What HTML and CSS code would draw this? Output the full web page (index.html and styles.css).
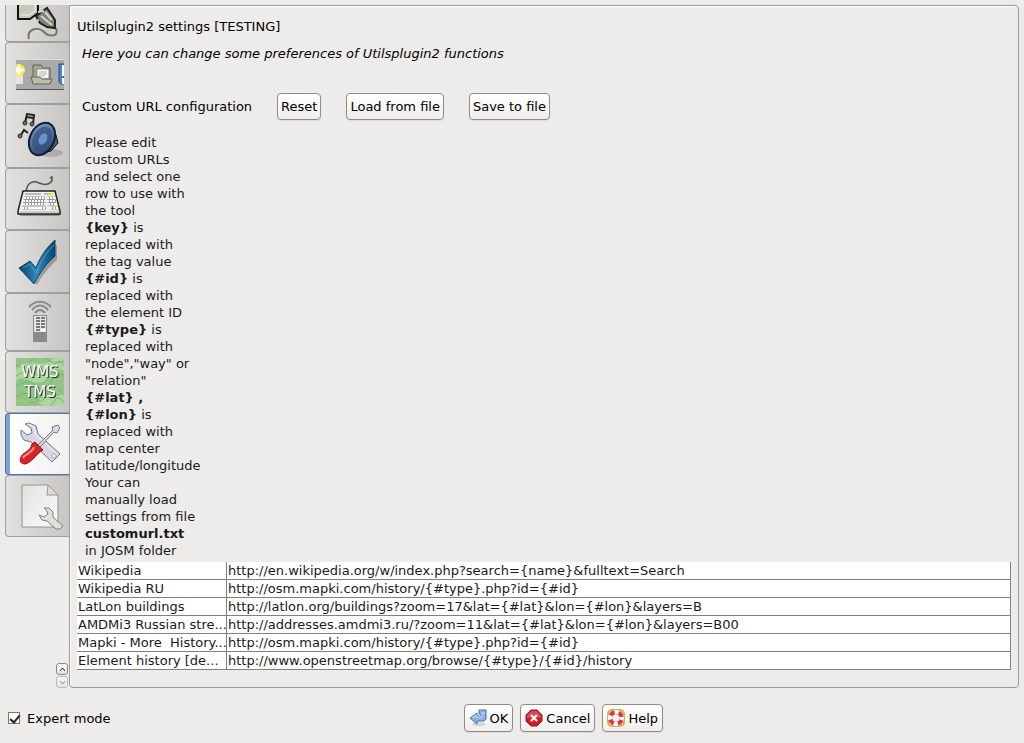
FILE: index.html
```html
<!DOCTYPE html>
<html lang="en">
<head>
    <meta charset="UTF-8">
    <meta name="viewport" content="width=device-width, initial-scale=1.0">
    <title>Preferences</title>
    <link rel="stylesheet" href="styles.css">
</head>
<body>
    <main class="preferences">
        <nav class="sidebar">
            <div class="tabs">
                <button class="tab tab-cut" aria-label="Connection">
                    <svg width="48" height="48" viewBox="0 0 48 48">
                        <path d="M2 6V27H14L22 21V6Z" fill="#c6cabb" stroke="#111" stroke-width="2"/>
                        <path d="M5 23H13L19 19V6" fill="none" stroke="#f1f2ec"/>
                        <path d="M13 47C10 38 21 34 27 39C32 45 44 46 40 36" fill="none" stroke="#73796b" stroke-width="2"/>
                        <path d="M20 24L31 16L39 28L39 36L31 35L24 31Z" fill="#7f8578" stroke="#22251f" stroke-width="2"/>
                        <path d="M23 28L18 30M28 19L22 20M25 24L36 33M29 20L36 28" stroke="#d4d6cc" stroke-width="2"/>
                    </svg>
                </button>
                <button class="tab" aria-label="Toolbar">
                    <svg width="48" height="48" viewBox="0 0 48 48">
                        <path d="M0 10H48V41H0Z" fill="#aaa"/>
                        <path d="M0 10.500H48" stroke="#ddd"/>
                        <path d="M0 40.500H48" stroke="#555"/>
                        <path d="M0 18H7V35H0Z" fill="#e3e3e0"/>
                        <circle cx="3" cy="21" r="6" fill="#f4e93c"/>
                        <path d="M3 15L5 19L9 21L5 23L3 27L0 23V19Z" fill="#fffde0"/>
                        <path d="M17 33V16H25L27 19H34V33Z" fill="#a6a78f" stroke="#62634f"/>
                        <path d="M21 20H33V30H21Z" fill="#fff" stroke="#888"/>
                        <path d="M23 23H31M23 25H31M23 27H29" stroke="#aaa"/>
                        <path d="M15 28H24L26 30H36L34 35H17Z" fill="#bdbea7" stroke="#62634f"/>
                        <path d="M48 15H43V33L45 35H48Z" fill="#4d86cc" stroke="#204a87"/>
                        <path d="M46 16H48V27H46ZM46 29H48V35H46Z" fill="#fff"/>
                    </svg>
                </button>
                <button class="tab tab-audio" aria-label="Audio">
                    <svg width="48" height="48" viewBox="0 0 48 48">
                        <defs>
                            <linearGradient id="cone" x2="1" y2="1"><stop stop-color="#8ba8d4"/><stop offset="1" stop-color="#183562"/></linearGradient>
                        </defs>
                        <ellipse cx="35" cy="41" rx="12" ry="4" fill="#000" opacity=".15"/>
                        <path d="M9 11L11 2L18 3L17 12M10 5L18 6" fill="none" stroke="#222" stroke-width="2"/>
                        <path d="M5 23L8 18L12 21" fill="none" stroke="#222" stroke-width="2"/>
                        <g fill="#767657" stroke="#222"><circle cx="9" cy="11" r="2"/><circle cx="16" cy="12" r="2"/><circle cx="4" cy="24" r="2"/></g>
                        <path d="M32 10L40 23L42 31L35 39L20 42Z" fill="#55585e" stroke="#111"/>
                        <ellipse cx="26" cy="27" rx="12" ry="17" transform="rotate(26 26 27)" fill="url(#cone)" stroke="#111d31" stroke-width="2"/>
                        <ellipse cx="26" cy="27" rx="9" ry="13" transform="rotate(26 26 27)" fill="#365380" opacity=".75"/>
                        <ellipse cx="27" cy="27" rx="4" ry="6" transform="rotate(26 27 27)" fill="#6d91c6"/>
                    </svg>
                </button>
                <button class="tab" aria-label="Shortcuts">
                    <svg width="48" height="48" viewBox="0 0 48 48">
                        <path d="M10 17C11 7 18 5 23 8C30 11 37 9 36 2L34 3" fill="none" stroke="#555" stroke-width="1.500"/>
                        <path d="M4 38H45L43 41H4Z" fill="#000" opacity=".3"/>
                        <path d="M7 16H39L44 36V39H2V36Z" fill="#eee" stroke="#222" stroke-width="1.500"/>
                        <path d="M9 19H25M28 19H32" stroke="#bbb" stroke-width="2"/>
                        <path d="M32 19H37" stroke="#e9dd24" stroke-width="2"/>
                        <path d="M8 23H29M7 26H29M7 29H30M6 33H30M31 23H39M31 26H40M32 29H40M34 33H42" stroke="#999" stroke-width="3"/>
                        <path d="M8 23H29M7 26H29M7 29H30M6 33H30M31 23H39M31 26H40M32 29H40M34 33H42" stroke="#fff" stroke-width="2" stroke-dasharray="2 1"/>
                        <path d="M12 33H25" stroke="#fff" stroke-width="2"/>
                        <path d="M3 37H43" stroke="#aaa"/>
                    </svg>
                </button>
                <button class="tab tab-check" aria-label="Data validator">
                    <svg width="48" height="48" viewBox="0 0 48 48">
                        <defs>
                            <linearGradient id="tick" x2="1"><stop stop-color="#0a416b"/><stop offset=".5" stop-color="#3288b9"/><stop offset="1" stop-color="#09436d"/></linearGradient>
                        </defs>
                        <path d="M6 33L17 26L23 32C27 20 33 12 41 7V22C34 28 27 36 21 47Z" fill="#000" opacity=".25"/>
                        <path d="M3 30L14 23L20 30C24 19 31 9 39 2V18C31 25 24 34 18 46Z" fill="url(#tick)" stroke="#0b446c"/>
                        <path d="M7 30L14 26L20 35C25 22 31 14 38 7" fill="none" stroke="#62a8cd" opacity=".7"/>
                    </svg>
                </button>
                <button class="tab tab-remote" aria-label="Remote control">
                    <svg width="48" height="48" viewBox="0 0 48 48">
                        <g fill="none" stroke="#888b8d" stroke-width="2"><path d="M13 9C19 2 29 2 35 9"/><path d="M16 12C21 6 27 6 32 12"/><path d="M19 15C22 11 26 11 29 15"/></g>
                        <path d="M17 17H31V44H17Z" fill="#888b8d"/>
                        <path d="M18 18H30V34H18Z" fill="#e6e6e6"/>
                        <path d="M20 20H24M20 23H24M20 26H24M20 29H24M20 32H24M25 20H29M25 23H29M25 26H29M25 29H29" stroke="#777a7c" stroke-width="2"/>
                        <path d="M25 31H29V33H25Z" fill="#fff"/>
                    </svg>
                </button>
                <button class="tab" aria-label="Imagery">
                    <svg width="48" height="48" viewBox="0 0 48 48">
                        <path d="M0 0H48V48H0Z" fill="#8fc587"/>
                        <path d="M0 12Q9 2 20 5T38 0H48V13Q37 7 32 18T12 22T0 35ZM21 48Q23 36 36 38T48 30V48Z" fill="#acd59f"/>
                        <path d="M0 7Q11 12 15 3T25 0M0 18Q12 10 19 16T35 10T48 8M0 28Q13 20 20 28T35 24T48 18M0 39Q11 31 18 40T32 35T48 37M9 48Q14 41 24 47T38 44T48 45M29 0Q38 8 48 3" fill="none" stroke="#7bb273"/>
                        <path d="M5 0Q8 8 0 12M0 44Q8 38 13 48M35 48Q36 28 48 25" fill="none" stroke="#b4c67f"/>
                        <g class="map-shadow"><text x="25" y="20">WMS</text><text x="25" y="40">TMS</text></g>
                        <g class="map-text"><text x="24" y="19">WMS</text><text x="24" y="39">TMS</text></g>
                    </svg>
                </button>
                <button class="tab tab-active" aria-label="Plugins">
                    <svg width="48" height="48" viewBox="0 0 48 48">
                        <path d="M9 4L13 3L20 6L22 14L44 34L36 42L15 22L8 20L5 15V10L11 15L16 13L15 8Z" fill="#d6d7e2" stroke="#717386"/>
                        <path d="M12 4L18 7L20 15L41 34" fill="none" stroke="#f4f4fa"/>
                        <circle cx="38" cy="36" r="2" fill="#fff" stroke="#aaa"/>
                        <path d="M22 25L37 10L36 7L42 5L44 8L41 13L38 12L24 27Z" fill="#d7dce1" stroke="#6f7782"/>
                        <path d="M16 24L19 22L27 30L24 32C21 34 15 43 9 44C5 44 3 41 5 37C6 33 15 31 16 24Z" fill="#d9232b" stroke="#990d14"/>
                        <path d="M7 38C8 35 16 33 18 27" fill="none" stroke="#ff9295" stroke-width="2"/>
                    </svg>
                </button>
                <button class="tab" aria-label="Advanced preferences">
                    <svg width="48" height="48" viewBox="0 0 48 48">
                        <defs>
                            <linearGradient id="page" x2="1" y2="1"><stop stop-color="#e2e2e2"/><stop offset="1" stop-color="#fafafa"/></linearGradient>
                        </defs>
                        <path d="M6 3H32L42 13V45H6Z" fill="url(#page)" stroke="#929292"/>
                        <path d="M32 3L31 13H42Z" fill="#ddd" stroke="#999"/>
                        <path d="M28 26L33 26L37 30L37 35L47 44L44 47H40L31 39L26 38L23 33L28 35L32 32L31 29Z" fill="#dfe0d9" stroke="#7e7f78"/>
                    </svg>
                </button>
            </div>
            <div class="scrollers">
                <button class="scroll-btn" aria-label="Scroll up"><svg width="7" height="7" viewBox="0 0 7 7"><path d="M1 5L3.500 2L6 5"/></svg></button>
                <button class="scroll-btn" aria-label="Scroll down" disabled><svg width="7" height="7" viewBox="0 0 7 7"><path d="M1 2L3.500 5L6 2"/></svg></button>
            </div>
        </nav>

        <section class="panel">
            <h1>Utilsplugin2 settings [TESTING]</h1>
            <p class="description">Here you can change some preferences of Utilsplugin2 functions</p>
            <div class="url-bar">
                <h2>Custom URL configuration</h2>
                <button class="btn">Reset</button>
                <button class="btn">Load from file</button>
                <button class="btn">Save to file</button>
            </div>
            <p class="help-text">
                Please edit custom URLs and select one row to use with the tool<br>
                <b>{key}</b> is replaced with the tag value<br>
                <b>{#id}</b> is replaced with the element ID<br>
                <b>{#type}</b> is replaced with "node","way" or "relation"<br>
                <b>{#lat} , {#lon}</b> is replaced with map center latitude/longitude<br>
                Your can manually load settings from file <b>customurl.txt</b><br>
                in JOSM folder
            </p>
            <table class="url-table" aria-label="Custom URLs">
                <tbody>
                    <tr><td class="name">Wikipedia</td><td>http://en.wikipedia.org/w/index.php?search={name}&amp;fulltext=Search</td></tr>
                    <tr><td class="name">Wikipedia RU</td><td>http://osm.mapki.com/history/{#type}.php?id={#id}</td></tr>
                    <tr><td class="name">LatLon buildings</td><td>http://latlon.org/buildings?zoom=17&amp;lat={#lat}&amp;lon={#lon}&amp;layers=B</td></tr>
                    <tr><td class="name">AMDMi3 Russian stre...</td><td>http://addresses.amdmi3.ru/?zoom=11&amp;lat={#lat}&amp;lon={#lon}&amp;layers=B00</td></tr>
                    <tr><td class="name">Mapki - More&nbsp; History...</td><td>http://osm.mapki.com/history/{#type}.php?id={#id}</td></tr>
                    <tr><td class="name">Element history [de...</td><td>http://www.openstreetmap.org/browse/{#type}/{#id}/history</td></tr>
                </tbody>
            </table>
        </section>
    </main>

    <footer class="footer">
        <label class="expert" for="expert"><input type="checkbox" id="expert" checked> Expert mode</label>
        <div class="actions">
            <button class="btn btn-icon">
                <svg width="18" height="18" viewBox="0 0 18 18">
                    <ellipse cx="10" cy="15" rx="7" ry="2" fill="#000" opacity=".12"/>
                    <path d="M1 9L8 4V7H12V5H10V1H17V10L15 12H8V15Z" fill="#8db3de" stroke="#4674ac"/>
                    <path d="M3 9L7 6V8H13V4H16" fill="none" stroke="#c7dcf3"/>
                </svg>
                OK
            </button>
            <button class="btn btn-icon">
                <svg width="18" height="18" viewBox="0 0 18 18">
                    <path d="M6 1H12L17 6V12L12 17H6L1 12V6Z" fill="#cf2029" stroke="#9f1118"/>
                    <path d="M6 2H12L16 6V9H2V6Z" fill="#e46167" opacity=".6"/>
                    <path d="M6 6L12 12M12 6L6 12" stroke="#fff" stroke-width="2"/>
                </svg>
                Cancel
            </button>
            <button class="btn btn-icon">
                <svg width="18" height="18" viewBox="0 0 18 18">
                    <rect x="1" y="1" width="16" height="16" rx="4" fill="#f3e3a4" stroke="#d9b33e" stroke-width="2"/>
                    <circle cx="9" cy="9" r="6" fill="#f5f4f3" stroke="#a9a9a9" stroke-width="5"/>
                    <circle cx="9" cy="9" r="6" fill="none" stroke="#fff" stroke-width="4"/>
                    <circle cx="9" cy="9" r="6" fill="none" stroke="#e33437" stroke-width="4" stroke-dasharray="5 4.425" stroke-dashoffset="-2.212"/>
                </svg>
                Help
            </button>
        </div>
    </footer>
</body>
</html>
```

FILE: styles.css
```css
* {
    box-sizing: border-box;
    margin: 0;
    padding: 0;
}

body {
    background-color: #edecea;
    color: #1a1a1a;
    font-family: "DejaVu Sans", sans-serif;
    font-size: 13px;
    line-height: 17px;
    padding: 5px;
}

button {
    font: inherit;
    color: #000;
}

svg {
    display: block;
    flex: none;
}

.preferences {
    display: flex;
}

.sidebar {
    display: flex;
    flex-direction: column;
    justify-content: space-between;
    width: 64px;
}

.tabs {
    display: flex;
    flex-direction: column;
}

.tab {
    display: flex;
    align-items: center;
    justify-content: center;
    height: 62px;
    padding-left: 4px;
    border: 1px solid #a19f9c;
    border-right: none;
    border-radius: 4px 0 0 4px;
    background: linear-gradient(to right, #e2e1df, #c8c6c3);
}

.tab-cut {
    height: 37px;
    align-items: flex-end;
    padding-bottom: 1px;
    border-top: none;
    border-radius: 0 0 0 4px;
    overflow: hidden;
}

.tab-audio {
    height: 64px;
}

.tab-check {
    height: 63px;
}

.tab-remote {
    height: 58px;
}

/* selected tab has a blue stripe on the left */
.tab-active {
    border-color: #4b76a8;
    background: linear-gradient(to right, #7ba4d6 4px, #fff 4px, #f1f0ef);
}

.map-text,
.map-shadow {
    font-size: 15px;
    text-anchor: middle;
    fill: #fff;
}

.map-shadow {
    fill: #222;
}

.scrollers {
    display: flex;
    flex-direction: column;
    align-items: flex-end;
    gap: 1px;
    padding-right: 1px;
}

.scroll-btn {
    display: flex;
    align-items: center;
    justify-content: center;
    width: 12px;
    height: 12px;
    border: 1px solid #8b8986;
    border-radius: 3px;
    background: linear-gradient(#fff, #e2e1df);
}

.scroll-btn path {
    fill: none;
    stroke: #222;
}

.scroll-btn:disabled {
    opacity: 0.5;
}

.panel {
    flex: 1;
    min-width: 0;
    padding: 12px 7px 17px;
    border: 1px solid #9c9a97;
    border-radius: 0 4px 4px 4px;
    box-shadow: inset 1px 1px #fff;
}

h1,
h2 {
    font-size: 13px;
    font-weight: normal;
    color: #000;
}

.description {
    margin: 10px 5px 31px;
    color: #000;
    font-style: italic;
}

.url-bar {
    display: flex;
    align-items: center;
    gap: 25px;
    padding-left: 5px;
}

.btn {
    height: 27px;
    padding: 0 3px;
    border: 1px solid #8e8c89;
    border-radius: 4px;
    background: linear-gradient(#fff, #efeeed);
    box-shadow: 0 1px 1px #dddbd9;
}

.help-text {
    width: 112px;
    margin: 14px 8px 3px;
}

.url-table {
    width: 100%;
    table-layout: fixed;
    border-collapse: separate;
    border-spacing: 0;
    background-color: #fff;
}

.url-table td {
    height: 18px;
    padding: 0 0 0 1px;
    border-right: 1px solid #808080;
    border-bottom: 1px solid #808080;
    white-space: nowrap;
    overflow: hidden;
}

.url-table .name {
    width: 150px;
}

.footer {
    display: flex;
    align-items: center;
    padding: 16px 3px 0;
}

.expert {
    display: flex;
    align-items: center;
    gap: 7px;
    color: #000;
}

.expert input {
    appearance: none;
    width: 12px;
    height: 12px;
    border: 1px solid #777;
    background: #fff;
}

/* tick mark */
.expert input:checked::before {
    content: "";
    display: block;
    width: 4px;
    height: 8px;
    margin-left: 3px;
    border: solid #222;
    border-width: 0 2px 2px 0;
    transform: rotate(40deg);
}

.actions {
    display: flex;
    flex: 1;
    justify-content: center;
    gap: 7px;
}

.btn-icon {
    display: flex;
    align-items: center;
    gap: 3px;
    height: 28px;
    padding: 0 4px;
}
```
